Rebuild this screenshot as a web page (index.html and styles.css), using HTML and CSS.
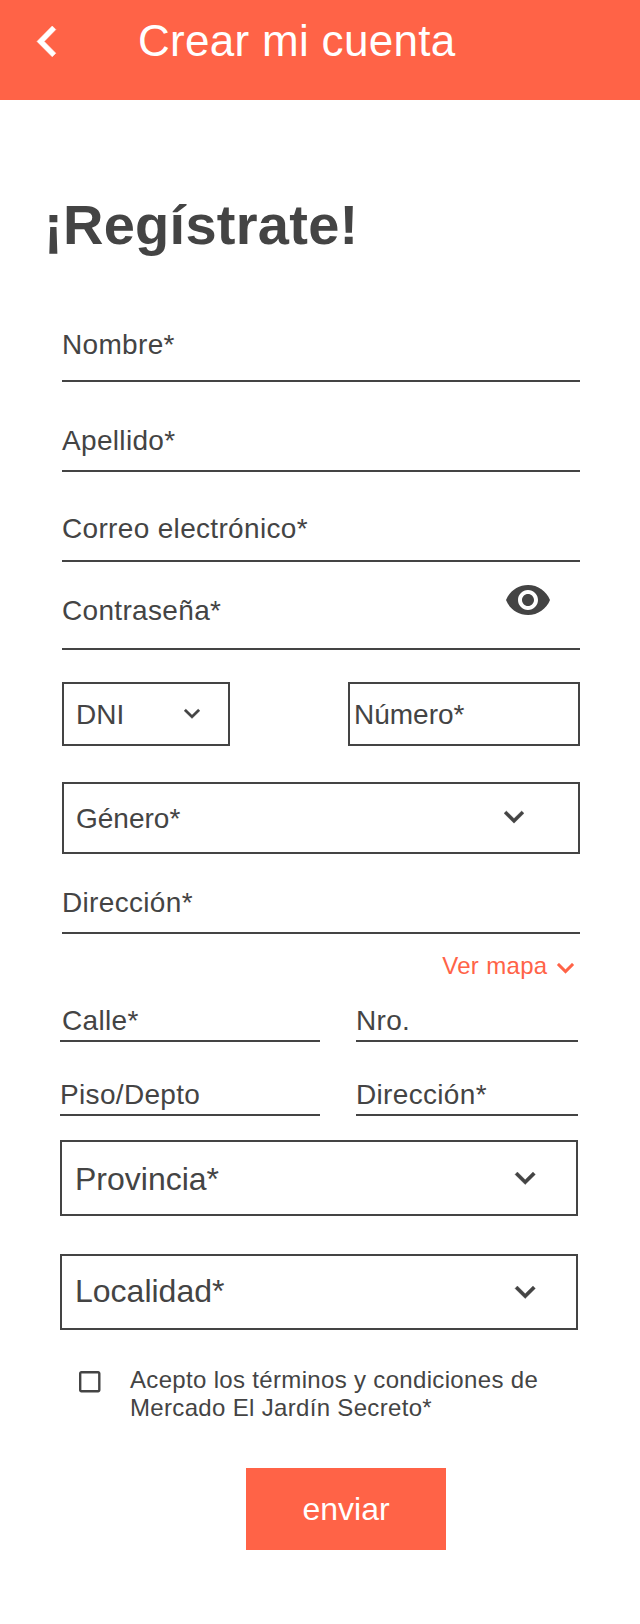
FILE: index.html
```html
<!DOCTYPE html>
<html lang="es">
<head>
<meta charset="utf-8">
<title>Crear mi cuenta</title>
<link rel="stylesheet" href="styles.css">
</head>
<body>
<svg class="sprite" aria-hidden="true">
  <symbol id="chevron-down" class="glyph" viewBox="6 8.59 12 7.41" preserveAspectRatio="none"><path d="M16.59 8.59 12 13.17 7.41 8.59 6 10l6 6 6-6z"/></symbol>
</svg>
<header class="topbar">
  <svg class="back" viewBox="8 6 7.41 12" preserveAspectRatio="none"><path d="M15.41 7.41 14 6l-6 6 6 6 1.41-1.41L10.83 12z"/></svg>
  <span class="topbar-title">Crear mi cuenta</span>
</header>
<main class="page">
  <h1 class="title">¡Regístrate!</h1>
  <form class="form">
    <div class="line name"><span>Nombre*</span></div>
    <div class="line surname"><span>Apellido*</span></div>
    <div class="line email"><span>Correo electrónico*</span></div>
    <div class="line password">
      <span>Contraseña*</span>
      <svg class="eye" viewBox="0 0 24 24"><path d="M12 4.5C7 4.5 2.73 7.61 1 12c1.73 4.39 6 7.5 11 7.5s9.27-3.11 11-7.5c-1.73-4.39-6-7.5-11-7.5zM12 17c-2.76 0-5-2.24-5-5s2.24-5 5-5 5 2.24 5 5-2.24 5-5 5zm0-8c-1.66 0-3 1.34-3 3s1.34 3 3 3 3-1.34 3-3-1.34-3-3-3z"/></svg>
    </div>
    <div class="document">
      <div class="box doc-type"><span>DNI</span><svg class="chev"><use href="#chevron-down"/></svg></div>
      <div class="box doc-number"><span>Número*</span></div>
    </div>
    <div class="box gender"><span>Género*</span><svg class="chev"><use href="#chevron-down"/></svg></div>
    <div class="line address"><span>Dirección*</span></div>
    <div class="map-link"><span>Ver mapa</span><svg class="chev"><use href="#chevron-down"/></svg></div>
  </form>
  <section class="details">
    <div class="grid">
      <div class="line short street"><span>Calle*</span></div>
      <div class="line short"><span>Nro.</span></div>
      <div class="line short"><span>Piso/Depto</span></div>
      <div class="line short"><span>Dirección*</span></div>
    </div>
    <div class="box region"><span>Provincia*</span><svg class="chev"><use href="#chevron-down"/></svg></div>
    <div class="box region city"><span>Localidad*</span><svg class="chev"><use href="#chevron-down"/></svg></div>
  </section>
  <div class="terms">
    <svg class="check" viewBox="3 3 18 18"><path d="M19 5v14H5V5h14m0-2H5c-1.1 0-2 .9-2 2v14c0 1.1.9 2 2 2h14c1.1 0 2-.9 2-2V5c0-1.1-.9-2-2-2z"/></svg>
    <span>Acepto los términos y condiciones de<br>Mercado El Jardín Secreto*</span>
  </div>
  <button class="submit" type="button">enviar</button>
</main>
</body>
</html>
```

FILE: styles.css
```css
* { box-sizing: border-box; }

body {
  margin: 0;
  background: #fff;
  color: #444;
  font: 28px/32px "Liberation Sans", Arial, sans-serif;
  letter-spacing: 0.33px;
}

svg { display: block; flex: none; fill: currentColor; overflow: visible; }
.glyph { overflow: visible; }
.sprite { position: absolute; width: 0; height: 0; }
.chev { stroke: currentColor; stroke-width: 0.2px; }

.topbar {
  display: flex;
  align-items: flex-start;
  height: 100px;
  padding: 16px 0 0 36.7px;
  background: #ff6347;
  color: #fff;
}
.back {
  width: 18.8px;
  height: 30.8px;
  margin-top: 10.2px;
  stroke: currentColor;
  stroke-width: 0.2px;
}
.topbar-title {
  margin-left: 82.5px;
  font-size: 44px;
  line-height: 50px;
  letter-spacing: 0.3px;
}

.page { display: flex; flex-direction: column; }

.title {
  margin: 93px 0 0 44px;
  font-size: 56px;
  line-height: 64px;
  letter-spacing: 0.28px;
}

.form { width: 518px; margin-left: 62px; }

.line {
  display: flex;
  align-items: flex-end;
  justify-content: space-between;
  border-bottom: 2px solid #444;
}
.name { height: 125px; padding-bottom: 19px; }
.surname { height: 90px; padding-bottom: 13px; }
.email { height: 90px; padding-bottom: 15px; }
.password { height: 88px; padding-bottom: 21px; }
.eye { width: 48px; height: 48px; margin: 0 28px 3px 0; }

.document { display: flex; justify-content: space-between; margin-top: 32px; }

.box {
  display: flex;
  align-items: flex-start;
  justify-content: space-between;
  border: 2px solid #444;
  letter-spacing: 0;
}
.doc-type { width: 168px; height: 64px; padding: 15px 28px 0 12px; }
.doc-type .chev { width: 16px; height: 9.6px; margin-top: 9.5px; }
.doc-number { width: 232px; height: 64px; padding: 15px 0 0 4px; }

.gender { height: 72px; margin-top: 36px; padding: 19px 54px 0 12px; }
.gender .chev { width: 20px; height: 12.2px; margin-top: 8px; }

.address { height: 80px; padding-bottom: 13px; }

.map-link {
  display: flex;
  justify-content: flex-end;
  margin-top: 18px;
  padding-right: 6.5px;
  color: #ff6347;
  font-size: 24px;
  line-height: 28px;
}
.map-link .chev { width: 17px; height: 10.4px; margin: 11px 0 0 9px; }

.details { width: 518px; margin-left: 60px; }
.grid {
  display: grid;
  grid-template-columns: 260px 222px;
  column-gap: 36px;
  row-gap: 38px;
  padding-top: 26px;
}
.short { height: 36px; padding-bottom: 3px; }
.street { padding-left: 2px; }

.region {
  height: 76px;
  margin-top: 24px;
  padding: 19px 40.6px 0 13px;
  font-size: 32px;
  line-height: 36px;
}
.region .chev { width: 20.4px; height: 12.6px; margin-top: 11px; }
.city { margin-top: 38px; padding-top: 17px; }
.city .chev { margin-top: 13px; }

.terms {
  display: flex;
  margin: 36px 0 0 79.2px;
  font-size: 24px;
  line-height: 28px;
}
.check { width: 21.5px; height: 21.5px; margin: 5.3px 29.3px 0 0; }

.submit {
  width: 200px;
  height: 82px;
  margin: 46px 0 0 246px;
  padding: 0;
  border: 0;
  background: #ff6347;
  color: #fff;
  font: 32px/36px "Liberation Sans", Arial, sans-serif;
}
```
